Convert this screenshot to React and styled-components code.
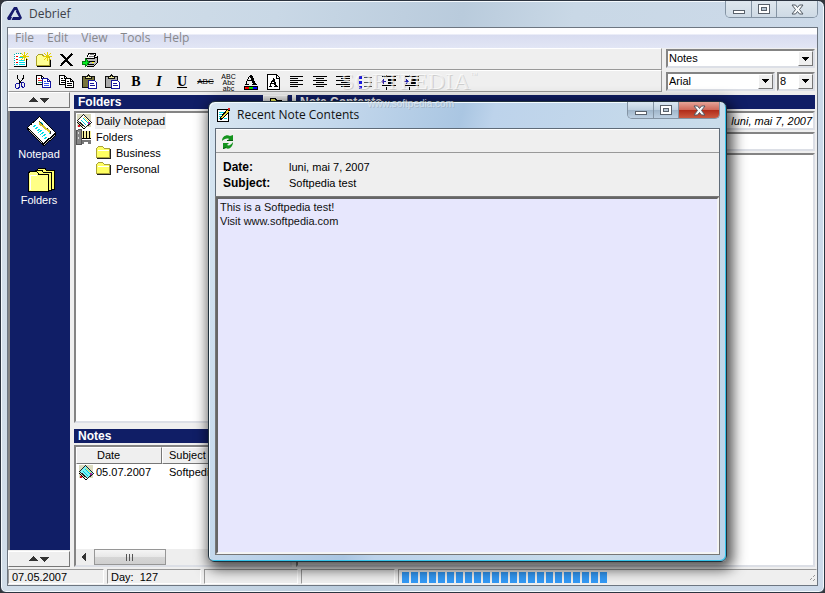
import React from "react";
import styled, { createGlobalStyle, css } from "styled-components";

const navy = "#101e66";
const face = "#efefef";

const GlobalStyle = createGlobalStyle`
  * { box-sizing: border-box; }
  body { margin: 0; background: #33363c; font-family: "Liberation Sans", Arial, sans-serif; font-size: 11px; line-height: 16px; color: #000; }
  button, select, textarea { font: inherit; color: inherit; margin: 0; border-radius: 0; }
  button { cursor: default; padding: 0; }
`;

const sunken = css`
  border: 2px solid;
  border-color: #848484 #dcdfe6 #dcdfe6 #848484;
`;

const Window = styled.div`
  position: relative;
  min-height: 100vh;
  display: flex;
  flex-direction: column;
  padding: 0 6px 6px;
  border: 1px solid #2c3440;
  border-radius: 7px 7px 6px 6px;
  background: linear-gradient(100deg, #d5e0ea 0%, #c9d8e6 30%, #b9cbdc 50%, #c9d8e6 62%, #cddaea 100%);
  box-shadow: inset 0 0 0 1px #f4f9fd;
`;

const TitleBar = styled.header`
  display: flex;
  align-items: center;
  gap: 6px;
  height: 26px;
  h1 { margin: 0; flex: 1; font: 400 12px/18px "Open Sans", sans-serif; color: #3c4048; }
`;

const Caption = styled.div`
  align-self: flex-start;
  display: flex;
  height: 17px;
  border: 1px solid #8494a4;
  border-top: 0;
  border-radius: 0 0 5px 5px;
  overflow: hidden;
`;

const CaptionButton = styled.button`
  width: ${(p) => (p.$wide ? 41 : 25)}px;
  display: grid;
  place-items: center;
  border: 0;
  border-left: ${(p) => (p.$first ? "0" : "1px solid #8494a4")};
  background: ${(p) =>
    p.$danger
      ? "linear-gradient(#e5a498, #cf6a5a 48%, #b02a18 50%, #cc5a40)"
      : p.$strong
      ? "linear-gradient(#dce8f2, #bfd0e0 48%, #9fb5c9 50%, #bdd0e2)"
      : "linear-gradient(#dfe7ee, #cedae5)"};
`;

const Client = styled.div`
  flex: 1;
  display: flex;
  flex-direction: column;
  border: 1px solid #6d7681;
  background: ${face};
`;

const MenuBar = styled.nav`
  display: flex;
  gap: 1px;
  height: 20px;
  padding: 0 0 1px 1px;
  background: linear-gradient(#fdfdff 0 6px, #d8dcf0 7px, #e2e6f5 100%);
`;

const MenuItem = styled.button`
  padding: 0 6px;
  border: 0;
  background: none;
  font: 12px/18px "Open Sans", sans-serif;
  color: #87888c;
`;

const ToolArea = styled.section`
  display: flex;
  gap: 2px;
  padding-right: 2px;
`;

const Bars = styled.div`
  flex: 1;
  min-width: 0;
`;

const ToolRow = styled.div`
  display: flex;
  height: 22px;
  border: 1px solid;
  border-color: #fff #999 #999 #fff;
`;

const Tool = styled.button`
  flex: 0 0 23px;
  display: flex;
  padding: 3px 0 0 4px;
  border: 0;
  background: none;
  overflow: hidden;
`;

const Glyph = styled.span`
  width: 16px;
  text-align: center;
  font: ${(p) => (p.$italic ? "italic " : "")}bold 14px/16px "Liberation Serif", serif;
  text-decoration: ${(p) => (p.$under ? "underline" : "none")};
`;

const Tiny = styled.span`
  width: 17px;
  text-align: center;
  font: ${(p) => (p.$stack ? "7px/6px" : "8px/16px")} "Liberation Sans", sans-serif;
  text-decoration: ${(p) => (p.$strike ? "line-through" : "none")};
  span { display: block; }
`;

const Pickers = styled.div`
  display: grid;
  grid-template-columns: 109px 38px;
  gap: 3px 2px;
  padding: 1px 0 1px 2px;
`;

const Picker = styled.label`
  position: relative;
  grid-column: ${(p) => (p.$full ? "1 / -1" : "auto")};
  height: 19px;
  background: #fff;
  ${sunken}
  select { width: 100%; height: 15px; padding: 0 16px 0 1px; border: 0; outline: 0; background: none; appearance: none; line-height: 15px; display: block; }
`;

const Arrow = styled.span`
  position: absolute;
  top: 0;
  right: 0;
  width: 15px;
  height: 15px;
  display: grid;
  place-items: center;
  background: ${face};
  border: 1px solid;
  border-color: #fff #777 #777 #fff;
  pointer-events: none;
`;

const Workspace = styled.main`
  flex: 1;
  display: grid;
  grid-template-columns: 62px 218px minmax(0, 1fr);
  column-gap: 4px;
  padding-right: 2px;
`;

const Column = styled.div`
  display: flex;
  flex-direction: column;
  min-width: 0;
  padding-top: ${(p) => p.$top || 0}px;
`;

const Scroller = styled.button`
  height: 16px;
  display: flex;
  justify-content: center;
  align-items: center;
  border: 1px solid;
  border-color: #fff #777 #777 #fff;
  background: ${face};
`;

const Shortcuts = styled.nav`
  flex: 1;
  display: flex;
  flex-direction: column;
  gap: 6px;
  margin: 3px 0 1px;
  padding: 4px 2px 0 0;
  border-left: 2px solid #848484;
  background: ${navy};
`;

const Shortcut = styled.button`
  display: flex;
  flex-direction: column;
  align-items: center;
  border: 0;
  background: none;
  color: #fff;
  line-height: 14px;
  svg { margin-left: 6px; }
`;

const Heading = styled.h2`
  display: flex;
  justify-content: space-between;
  height: 14px;
  margin: 0;
  padding: 0 4px;
  background: ${navy};
  color: #fff;
  font: bold 12px/14px "Liberation Sans", sans-serif;
`;

const PinButton = styled.button`
  width: 25px;
  height: 14px;
  border: 1px solid;
  border-color: #fff #777 #777 #fff;
  background: ${face};
  display: grid;
  place-items: center;
`;

const Tree = styled.ul`
  flex: 1;
  list-style: none;
  margin: 2px 0 6px;
  padding: 0;
  background: #fff;
  ${sunken}
`;

const TreeItem = styled.li`
  display: flex;
  align-items: center;
  gap: 4px;
  height: 16px;
  padding-left: ${(p) => (p.$nested ? 20 : 0)}px;
  span { padding: 0 1px; margin-left: -1px; background: ${(p) => (p.$selected ? face : "none")}; }
`;

const NoteList = styled.div`
  height: 122px;
  display: flex;
  flex-direction: column;
  margin-top: 2px;
  background: #fff;
  ${sunken}
`;

const NoteTable = styled.table`
  width: 100%;
  table-layout: fixed;
  border-collapse: separate;
  border-spacing: 0;
  th { height: 17px; padding: 0 0 0 6px; font-weight: 400; text-align: left; background: ${face}; border: 1px solid; border-color: #fff #777 #777 #fff; line-height: 15px; }
  th:first-child { width: 86px; padding-left: 20px; }
  td { padding: 0 0 0 7px; white-space: nowrap; line-height: 16px; }
  td:first-child { padding-left: 2px; }
`;

const NoteDate = styled.span`
  display: flex;
  align-items: center;
  gap: 2px;
`;

const ScrollTrack = styled.div`
  margin-top: auto;
  display: flex;
  height: 16px;
  background: #eee;
`;

const ScrollArrow = styled.button`
  width: 18px;
  padding-right: 4px;
  border: 0;
  background: none;
`;

const Thumb = styled.div`
  width: 72px;
  display: grid;
  place-items: center;
  border: 1px solid #969696;
  background: linear-gradient(#f5f5f5, #e8e8e8 48%, #d6d6d6 50%, #cfcfcf);
`;

const Field = styled.div`
  height: 19px;
  margin-top: 2px;
  padding: 1px 1px 0;
  background: #fff;
  text-align: right;
  font-style: italic;
  line-height: 15px;
  ${sunken}
`;

const Page = styled(Field)`
  flex: 1;
  height: auto;
`;

const StatusBar = styled.footer`
  display: grid;
  grid-template-columns: 96px 94px 94px 94px minmax(0, 1fr);
  gap: 3px;
  height: 18px;
  padding-top: 2px;
`;

const StatusCell = styled.div`
  height: 15px;
  padding-left: 3px;
  border: 1px solid;
  border-color: #999 #fff #fff #999;
  line-height: 14px;
  white-space: pre;
`;

const ProgressCell = styled(StatusCell)`
  border-color: #999 transparent transparent #999;
`;

const Progress = styled.div`
  display: flex;
  align-items: center;
  justify-content: space-between;
`;

const Blocks = styled.div`
  display: flex;
  gap: 2px;
  padding-top: 2px;
  span { width: 7px; height: 11px; background: #3399f5; }
`;

const Dialog = styled.section`
  position: absolute;
  left: 207px;
  right: 97px;
  top: 100px;
  bottom: 30px;
  display: flex;
  flex-direction: column;
  padding: 0 6px 6px;
  border: 1px solid #20303c;
  border-radius: 7px 7px 6px 6px;
  background: linear-gradient(105deg, #d8e6f1 0%, #c4d8ec 20%, #aac6e2 40%, #bdd3eb 45%, #c9dcea 80%, #b9d2e9 100%);
  box-shadow: inset 1px 1px 0 #f3fbff, inset -1px -1px 0 #35c3ea, 3px 4px 14px 3px rgba(0, 0, 0, 0.7);
  header { padding-left: 2px; }
  h1 { color: #111; }
`;

const DialogBody = styled.div`
  flex: 1;
  display: flex;
  flex-direction: column;
  border: 1px solid #5f6b78;
  background: ${face};
`;

const DialogTools = styled.div`
  height: 24px;
  padding: 4px;
  border-top: 1px solid #fff;
  border-bottom: 1px solid #999;
  button { border: 0; background: none; display: block; }
`;

const Details = styled.dl`
  display: grid;
  grid-template-columns: 66px 1fr;
  margin: 0;
  padding: 6px 7px;
  dt { font-weight: bold; font-size: 12px; }
  dd { margin: 0; }
`;

const Editor = styled.textarea`
  flex: 1;
  width: 100%;
  resize: none;
  padding: 1px 2px;
  outline: 0;
  background: #e7e7fd;
  line-height: 14px;
  color: #111;
  border: 2px solid;
  border-color: #666 #f4f4f4 #f4f4f4 #666;
  box-shadow: 0 0 0 1px #777;
`;

const Watermark = styled.div`
  position: absolute;
  left: 340px;
  top: 69px;
  width: 132px;
  pointer-events: none;
  text-align: right;
  font: 24px/23px "Liberation Serif", serif;
  color: rgba(255, 255, 255, 0.6);
  text-shadow: 1px 1px 0 rgba(120, 120, 120, 0.28);
  sup { font-size: 7px; line-height: 8px; vertical-align: 12px; }
  small { display: block; padding-right: 19px; font: 10px/22px "Liberation Sans", sans-serif; color: rgba(225, 235, 245, 0.75); }
`;

const Svg = ({ w = 16, h = w, children }) => (
  <svg width={w} height={h} viewBox={`0 0 ${w} ${h}`} fill="none" shapeRendering="crispEdges" aria-hidden="true">
    {children}
  </svg>
);

const Spark = () => (
  <path d="M11.500 0v9M7 4.500h9M8 1l7 7M15 1L8 8" stroke="#e3cf00" strokeWidth="1" />
);

const NewNote = () => (
  <Svg>
    <path d="M1 2h12v13H1z" fill="#fff" />
    <path d="M1.500 2v13M3 1.500h6" stroke="#00aab2" strokeDasharray="1 1" />
    <path d="M1 14.500h13M13.500 7v8" stroke="#000" />
    <path d="M3 4.500h2M3 7.500h2M3 10.500h2" stroke="#e00" />
    <path d="M6 5.500h4M6 8.500h6M6 10.500h6M6 12.500h6M3 12.500h2" stroke="#00e0e8" />
    <Spark />
  </Svg>
);

const NewFolder = () => (
  <Svg>
    <path d="M.5 13.500v-9l2-2h4l1 2h6v9z" fill="#ffff94" stroke="#aaa12a" />
    <path d="M1 14.500h13.500V7" stroke="#000" />
    <Spark />
  </Svg>
);

const Delete = () => (
  <Svg>
    <path d="M2 2l11 12" stroke="#000" strokeWidth="2" />
    <path d="M13 2L2 13" stroke="#000" strokeWidth="2" />
    <path d="M1 2.500h3M12 2.500h2M12 13.500h2M1 13.500h2" stroke="#000" />
  </Svg>
);

const Print = () => (
  <Svg>
    <path d="M5 5l2-4h7l-2 5" fill="#fff" stroke="#000" />
    <path d="M8 2.500h4M7 4.500h5" stroke="#777" />
    <path d="M3 6h10l2-1v6l-3 3H5l-2-2z" fill="#bbb" stroke="#000" />
    <path d="M4 9h9M6 12h6" stroke="#000" />
    <path d="M10 10.500h2" stroke="#ff0" />
    <path d="M0 9h3V6l4 4.500L3 15v-3H0z" fill="#00ee22" stroke="#067b10" />
  </Svg>
);

const Cut = () => (
  <Svg>
    <path d="M4.500 1v3l4 6M10.500 1v3l-5 6" stroke="#000" />
    <path d="M5.500 9.500h-2l-1 1v3l1 1h2l1-2v-2zM8.500 8.500h2l1 1v3l-1 1h-1l-1-2z" stroke="#1414a0" />
  </Svg>
);

const Sheet = ({ x, y, stroke, line }) => (
  <g transform={`translate(${x} ${y})`}>
    <path d="M.5.5h5l3 3v6h-8z" fill="#fff" stroke={stroke} />
    <path d="M5.500 1v2.500H8" stroke={stroke} />
    <path d="M2 3.500h2M2 5.500h5M2 7.500h5" stroke={line} />
  </g>
);

const Copy = ({ color }) => (
  <Svg>
    <Sheet x={0} y={1} stroke="#000" line={color ? "#2c9a6c" : "#000"} />
    {color && <path d="M2 4.500h2M2 6.500h4" stroke="#e02020" />}
    <Sheet x={6} y={4} stroke={color ? "#14149c" : "#000"} line={color ? "#3355ee" : "#000"} />
  </Svg>
);

const Paste = ({ fill }) => (
  <Svg>
    <path d="M.5 2.500h12v11H.5z" fill={fill} stroke="#111" />
    <path d="M3.500 4.500v-2h2l1-2 1 2h2v2z" fill="#eeea9a" stroke="#111" />
    <path d="M6.500 6.500h6l2 2v6h-8z" fill="#fff" stroke="#14149c" />
    <path d="M8 9.500h4M8 11.500h5" stroke="#14149c" />
  </Svg>
);

const FontColor = () => (
  <Svg>
    <path d="M3.500 10V8l3-6h1" stroke="#000" />
    <path d="M7 1h2l4 9h-3L7 3zM5 6h5v1H5z" fill="#000" />
    <path d="M2 10.500h4M9 10.500h5" stroke="#000" />
    <path d="M1 12h14v4H1z" fill="#000" />
    <path d="M2 14h4" stroke="#f00" strokeWidth="2" />
    <path d="M6 14h4" stroke="#0d0" strokeWidth="2" />
    <path d="M10 14h4" stroke="#00f" strokeWidth="2" />
  </Svg>
);

const FontDialog = () => (
  <Svg>
    <path d="M1.500.5h9l3 3v12h-12z" fill="#fff" stroke="#000" />
    <path d="M10.500 1v3H13" stroke="#000" />
    <path d="M4.500 12v-2l3-5" stroke="#000" />
    <path d="M7 4h1l3 8H9L7 6zM5 9h5v1H5z" fill="#000" />
    <path d="M3 12.500h3M8 12.500h4" stroke="#000" />
  </Svg>
);

const alignPaths = {
  left: "M1 2.500h13M1 4.500h8M1 6.500h13M1 8.500h8M1 10.500h13M1 12.500h8",
  center: "M1 2.500h14M4 4.500h8M1 6.500h14M4 8.500h8M1 10.500h14M4 12.500h8",
  right: "M1 2.500h14M6 4.500h9M1 6.500h14M6 8.500h9M1 10.500h14M6 12.500h9",
};

const Align = ({ side }) => (
  <Svg>
    <path d={alignPaths[side]} stroke="#000" />
  </Svg>
);

const Bullets = () => (
  <Svg>
    <path d="M1 3h3M1 8h3M1 13h3" stroke="#1616dd" strokeWidth="3" />
    <path d="M6 3.500h8M6 8.500h8M6 12.500h8" stroke="#555" />
  </Svg>
);

const Indent = ({ out }) => (
  <Svg>
    <path d="M1 2.500h14M7 5.500h8M7 8.500h5M1 11.500h14M5.500 13v3M5.500 1v2" stroke="#000" />
    <path d="M7 5h8v2H7zM7 8h5v2H7z" fill="#000" />
    <path d={out ? "M0 7.500h5M1.500 6v3M2.500 5v5" : "M0 7.500h5M3.500 6v3M2.500 5v5"} stroke="#1c1ca8" />
  </Svg>
);

const UpDown = () => (
  <Svg w={22} h={8}>
    <path d="M1 6h9L5.500 1zM12 2h9l-4.500 5z" fill="#333" />
  </Svg>
);

const Notepad = () => (
  <Svg w={32}>
    <path d="M1 12L14 1l16 17v3L18 31l-3-2L1 14z" fill="#000" />
    <path d="M2 12L14 2l15 16-12 10z" fill="#fff" />
    <path d="M3 14l13 14v1L3 15zM18 29l11-9v1l-11 9z" fill="#c4c4c4" />
    <path d="M7 12l3-2M9 14l3-2M11 16l3-2M12 18l4-3M14 20l4-3M16 22l4-3M18 24l3-2M14 7l3 2M20 13l3 2M23 18l2 1" stroke="#00dfe7" />
    <path d="M13 7l12 11" stroke="#333" strokeWidth="2" />
    <path d="M13 8l11 9" stroke="#d9c92c" strokeWidth="2" />
    <path d="M4 10l2-1M7 8l2-2M10 5l2-2" stroke="#000" />
  </Svg>
);

const Folders = () => (
  <Svg w={30} h={26}>
    <path d="M10 22V3l2-2h6l1 2h8v19z" fill="#ffff70" stroke="#000" />
    <path d="M7 23V5l2-2h6l1 2h8v18z" fill="#ffff70" stroke="#000" />
    <path d="M1.500 24.500V6l2-2h6l2 3h10v17.500z" fill="#ffff86" stroke="#000" />
    <path d="M3 8.500h7M3 9v14" stroke="#fff" />
  </Svg>
);

const SmallPad = ({ fill = "#fff" }) => (
  <Svg>
    <path d="M1 1h14v13H1z" fill="#dcdcc0" />
    <path d="M1.500 7.500l6-6 8 8-6 5z" fill={fill} stroke="#222" />
    <path d="M5 7l5 5M7 5l5 5" stroke="#00cbd5" />
    <path d="M8 4l5 5" stroke="#e7d73c" />
    <path d="M1 9l6 6h2" stroke="#000" />
    <path d="M2 12h2v2H2z" fill="#d12" />
    <path d="M12 9h2v2h-2z" fill="#a026a0" />
  </Svg>
);

const Cabinet = () => (
  <Svg>
    <path d="M.5 1.500l3-1h2v15h-5z" fill="#858585" stroke="#555" />
    <path d="M6 2h9v8H6z" fill="#f5f0a0" />
    <path d="M7.500 2v8M10.500 2v8M13.500 2v8M6 9.500h9" stroke="#000" />
    <path d="M6 11h9v4h-3v-2H8v2H6z" fill="#777" />
    <path d="M2 4h1M2 9h1" stroke="#ddd" strokeWidth="2" />
  </Svg>
);

const Folder = () => (
  <Svg>
    <path d="M.5 12.500v-9l2-2h4l2 2h5v9z" fill="#ffff62" stroke="#aaa23a" />
    <path d="M2 5.500h11" stroke="#fff" />
    <path d="M1 13.500h13.500V4" stroke="#222" />
  </Svg>
);

const Compose = () => (
  <Svg w={14} h={16}>
    <path d="M.5 2.500h11v12H.5z" fill="#fff" stroke="#000" />
    <path d="M1 14.500h11" stroke="#000" />
    <path d="M2 5.500h6M2 7.500h4M2 9.500h3M2 11.500h2M7 11.500h3" stroke="#00d5dd" />
    <path d="M3.500 12.500v-2l7-8 2 1-7 8z" fill="#f0d93c" stroke="#000" />
    <path d="M4.500 10.500l6-7 1 1-6 6z" fill="#f0d93c" />
    <path d="M11 1h2v2h-2z" fill="#d22" />
  </Svg>
);

const Refresh = () => (
  <svg width="16" height="16" viewBox="0 0 16 16" aria-hidden="true">
    <path d="M2 7C2 2 7 0 10 2l3-1v6H7l2-2C7 4 4 5 2 7z" fill="#14941e" />
    <path d="M13 8c0 5-4 8-7 6l-3 1V9h6l-2 2c2 1 4 0 6-3z" fill="#14941e" />
    <path d="M7 6.500h6M3 14.500l3-1" stroke="#075b0d" />
  </svg>
);

const Logo = () => (
  <svg width="16" height="16" viewBox="0 0 16 16" aria-hidden="true">
    <path d="M7 1h3l5 11-2 2H1l-1-2zM8 4l-4 7h8z" fill="#161a6c" fillRule="evenodd" />
    <path d="M4 14L9 4" stroke="#dce7f1" />
  </svg>
);

const MinIcon = () => (
  <Svg w={14} h={11}>
    <path d="M1.500 6.500h11v3h-11z" fill="#fff" stroke="#59616b" />
  </Svg>
);

const MaxIcon = () => (
  <Svg w={12} h={11}>
    <path d="M.5.5h11v9H.5z" fill="#fff" stroke="#59616b" />
    <path d="M3.500 3.500h5v3h-5z" fill="#b8c7d4" stroke="#59616b" />
  </Svg>
);

const CloseIcon = () => (
  <svg width="13" height="11" viewBox="0 0 13 11" aria-hidden="true">
    <path d="M1 1h3.500l2 2.500L8.500 1H12L8.500 5.500 12 10H8.500l-2-2.500-2 2.500H1l3.500-4.500z" fill="#f8fafb" stroke="#525a64" />
  </svg>
);

const Controls = ({ dialog }) => (
  <Caption>
    <CaptionButton $first $strong={dialog} aria-label="Minimize"><MinIcon /></CaptionButton>
    <CaptionButton $strong={dialog} aria-label="Maximize"><MaxIcon /></CaptionButton>
    <CaptionButton $wide $danger={dialog} aria-label="Close"><CloseIcon /></CaptionButton>
  </Caption>
);

const Select = ({ label, options, full }) => (
  <Picker $full={full}>
    <select aria-label={label}>
      {options.map((o) => <option key={o}>{o}</option>)}
    </select>
    <Arrow>
      <Svg w={7} h={4}><path d="M0 0h7L3.500 4z" fill="#000" /></Svg>
    </Arrow>
  </Picker>
);

const fileTools = [
  ["New note", <NewNote />],
  ["New folder", <NewFolder />],
  ["Delete", <Delete />],
  ["Print", <Print />],
];

const formatTools = [
  ["Cut", <Cut />],
  ["Copy", <Copy color />],
  ["Copy text", <Copy />],
  ["Paste", <Paste fill="#77743c" />],
  ["Paste text", <Paste fill="#aaa" />],
  ["Bold", <Glyph>B</Glyph>],
  ["Italic", <Glyph $italic>I</Glyph>],
  ["Underline", <Glyph $under>U</Glyph>],
  ["Strikethrough", <Tiny $strike>ABC</Tiny>],
  ["Change case", <Tiny $stack><span>ABC</span><span>Abc</span><span>abc</span></Tiny>],
  ["Font color", <FontColor />],
  ["Font", <FontDialog />],
  ["Align left", <Align side="left" />],
  ["Align center", <Align side="center" />],
  ["Align right", <Align side="right" />],
  ["Bullets", <Bullets />],
  ["Decrease indent", <Indent out />],
  ["Increase indent", <Indent />],
];

const Tools = ({ items }) => (
  <ToolRow>
    {items.map(([name, icon]) => <Tool key={name} aria-label={name}>{icon}</Tool>)}
  </ToolRow>
);

export default function App() {
  return (
    <>
      <GlobalStyle />
      <Window>
        <TitleBar>
          <Logo />
          <h1>Debrief</h1>
          <Controls />
        </TitleBar>
        <Client>
          <MenuBar>
            {["File", "Edit", "View", "Tools", "Help"].map((m) => <MenuItem key={m}>{m}</MenuItem>)}
          </MenuBar>
          <ToolArea>
            <Bars>
              <Tools items={fileTools} />
              <Tools items={formatTools} />
            </Bars>
            <Pickers>
              <Select full label="View" options={["Notes"]} />
              <Select label="Font" options={["Arial"]} />
              <Select label="Size" options={["8"]} />
            </Pickers>
          </ToolArea>
          <Workspace>
            <Column>
              <Scroller aria-label="Scroll up"><UpDown /></Scroller>
              <Shortcuts>
                <Shortcut><Notepad />Notepad</Shortcut>
                <Shortcut><Folders />Folders</Shortcut>
              </Shortcuts>
              <Scroller aria-label="Scroll down"><UpDown /></Scroller>
            </Column>
            <Column $top={3}>
              <Heading>
                Folders
                <PinButton aria-label="Browse folders">
                  <Svg w={12} h={10}><path d="M.5 9.500v-8h5l1 2h5v6z" fill="#ffff62" stroke="#000" /></Svg>
                </PinButton>
              </Heading>
              <Tree>
                <TreeItem $selected><SmallPad /><span>Daily Notepad</span></TreeItem>
                <TreeItem><Cabinet /><span>Folders</span></TreeItem>
                <TreeItem $nested><Folder /><span>Business</span></TreeItem>
                <TreeItem $nested><Folder /><span>Personal</span></TreeItem>
              </Tree>
              <Heading>Notes</Heading>
              <NoteList>
                <NoteTable>
                  <thead><tr><th>Date</th><th>Subject</th></tr></thead>
                  <tbody>
                    <tr>
                      <td><NoteDate><SmallPad fill="#7ff0f5" />05.07.2007</NoteDate></td>
                      <td>Softpedia test</td>
                    </tr>
                  </tbody>
                </NoteTable>
                <ScrollTrack>
                  <ScrollArrow aria-label="Scroll left">
                    <Svg w={5} h={8}><path d="M5 0v8L0 4z" fill="#333" /></Svg>
                  </ScrollArrow>
                  <Thumb>
                    <Svg w={9} h={7}><path d="M.5 0v7M3.500 0v7M6.500 0v7" stroke="#555" /></Svg>
                  </Thumb>
                </ScrollTrack>
              </NoteList>
            </Column>
            <Column $top={3}>
              <Heading>Note Contents</Heading>
              <Field>luni, mai 7, 2007</Field>
              <Field />
              <Page />
            </Column>
          </Workspace>
          <StatusBar>
            <StatusCell>07.05.2007</StatusCell>
            <StatusCell>{"Day:  127"}</StatusCell>
            <StatusCell />
            <StatusCell />
            <ProgressCell>
              <Progress>
                <Blocks role="progressbar" aria-label="Progress">
                  {Array.from({ length: 23 }, (_, i) => <span key={i} />)}
                </Blocks>
                <Svg w={12} h={12}>
                  <path d="M11 4l-7 7M11 8l-3 3" stroke="#999" strokeDasharray="1 1" />
                </Svg>
              </Progress>
            </ProgressCell>
          </StatusBar>
        </Client>

        <Dialog role="dialog" aria-label="Recent Note Contents">
          <TitleBar>
            <Compose />
            <h1>Recent Note Contents</h1>
            <Controls dialog />
          </TitleBar>
          <DialogBody>
            <DialogTools>
              <button aria-label="Refresh"><Refresh /></button>
            </DialogTools>
            <Details>
              <dt>Date:</dt><dd>luni, mai 7, 2007</dd>
              <dt>Subject:</dt><dd>Softpedia test</dd>
            </Details>
            <Editor
              aria-label="Note text"
              spellCheck={false}
              defaultValue={"This is a Softpedia test!\nVisit www.softpedia.com"}
            />
          </DialogBody>
        </Dialog>

        <Watermark>SOFTPEDIA<sup>™</sup><small>www.softpedia.com</small></Watermark>
      </Window>
    </>
  );
}
